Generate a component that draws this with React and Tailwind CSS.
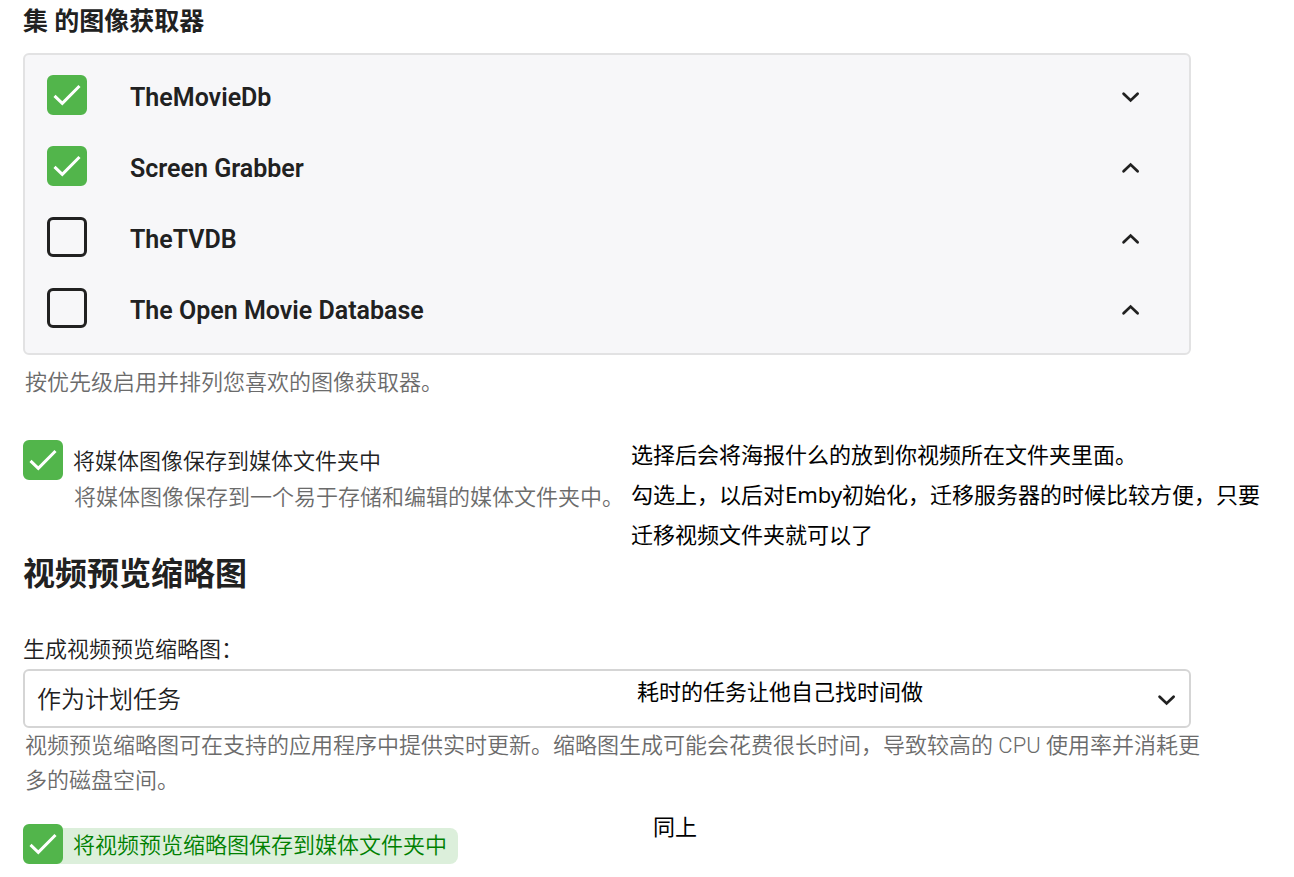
import { useState } from "react";

const FETCHERS = [
  { id: "tmdb", name: "TheMovieDb", enabled: true, direction: "down" },
  { id: "grabber", name: "Screen Grabber", enabled: true, direction: "up" },
  { id: "tvdb", name: "TheTVDB", enabled: false, direction: "up" },
  { id: "omdb", name: "The Open Movie Database", enabled: false, direction: "up" },
];

function Chevron({ direction }) {
  return (
    <svg viewBox="0 0 24 24" className="block size-6" fill="none" stroke="#212121" strokeWidth="2.8" strokeLinecap="round" strokeLinejoin="miter" aria-hidden="true">
      <path d={direction === "down" ? "M4.6 8.8 11.6 15.4l7-6.6" : "M4.6 15.2 11.6 8.6l7 6.6"} />
    </svg>
  );
}

function Checkbox({ id, defaultChecked }) {
  const [checked, setChecked] = useState(defaultChecked);
  return (
    <span className="z-10 grid size-10 shrink-0">
      <input
        id={id}
        type="checkbox"
        checked={checked}
        onChange={(e) => setChecked(e.target.checked)}
        className="col-start-1 row-start-1 size-10 appearance-none rounded-md border-3 border-[#212121] checked:border-[#52b54b] checked:bg-[#52b54b]"
      />
      {checked && (
        <svg viewBox="0 0 40 40" className="pointer-events-none col-start-1 row-start-1 size-10" fill="none" stroke="#fff" strokeWidth="3" aria-hidden="true">
          <path d="M7.5 20.8 15.3 28.3 32.5 11" />
        </svg>
      )}
    </span>
  );
}

export default function App() {
  return (
    <main className="bg-white pt-1 pb-3 pl-[23px] font-['Roboto','Noto_Sans_CJK_SC',sans-serif] text-[22px] leading-[35px] font-[350] text-[#212121]">
      <section className="mr-[103px]">
        <h3 className="text-[25px] leading-9 font-bold">集 的图像获取器</h3>
        <ul className="mt-[13px] rounded-md border-2 border-[#e2e2e3] bg-[#f7f7f9] pt-1 pr-[46px] pb-[10px] pl-[22px]">
          {FETCHERS.map((f) => (
            <li key={f.id} className="flex h-[71px] items-center">
              <Checkbox id={f.id} defaultChecked={f.enabled} />
              <label htmlFor={f.id} className="grow pt-[6px] pl-[43px] text-[25px] font-semibold">
                {f.name}
              </label>
              <button type="button" className="pt-1" aria-label={f.direction === "down" ? "下移" : "上移"}>
                <Chevron direction={f.direction} />
              </button>
            </li>
          ))}
        </ul>
        <p className="mt-[10px] pl-[2px] text-[#6b6b6b]">按优先级启用并排列您喜欢的图像获取器。</p>
      </section>

      <section className="mt-[34px] mr-[23px] grid grid-cols-[608px_1fr]">
        <div className="pt-[6px]">
          <div className="flex items-center">
            <Checkbox id="save-images" defaultChecked />
            <label htmlFor="save-images" className="pt-[2px] pl-[10px]">将媒体图像保存到媒体文件夹中</label>
          </div>
          <p className="pl-[51px] whitespace-nowrap text-[#6b6b6b]">将媒体图像保存到一个易于存储和编辑的媒体文件夹中。</p>
        </div>
        <p className="font-['Noto_Sans','Noto_Sans_CJK_SC',sans-serif] leading-10 font-normal text-black">
          选择后会将海报什么的放到你视频所在文件夹里面。
          <br />
          勾选上，以后对Emby初始化，迁移服务器的时候比较方便，只要迁移视频文件夹就可以了
        </p>
      </section>

      <section className="mt-1">
        <h2 className="text-[32px] leading-8 font-bold">视频预览缩略图</h2>
        <label htmlFor="preview" className="mt-[42px] block">生成视频预览缩略图：</label>
        <div className="relative mt-[2px] mr-[103px] flex items-center">
          <select id="preview" className="h-[59px] w-full appearance-none rounded-md border-2 border-[#d5d5d5] bg-white px-3 pt-[2px] text-2xl font-[350]">
            <option>作为计划任务</option>
          </select>
          <span className="pointer-events-none absolute right-3 pt-[2px]">
            <Chevron direction="down" />
          </span>
          <span className="pointer-events-none absolute top-[6px] left-[614px] font-normal text-black">耗时的任务让他自己找时间做</span>
        </div>
        <p className="mr-[80px] pl-[2px] text-[#6b6b6b]">
          视频预览缩略图可在支持的应用程序中提供实时更新。缩略图生成可能会花费很长时间，导致较高的 CPU 使用率并消耗更多的磁盘空间。
        </p>
      </section>

      <section className="mt-3 grid grid-cols-[630px_1fr]">
        <div className="flex items-end pt-[14px]">
          <Checkbox id="save-previews" defaultChecked />
          <label htmlFor="save-previews" className="-ml-2 rounded-r-lg bg-[#dcefdb] pr-[11px] pl-[18px] leading-9 text-[#008000]">
            将视频预览缩略图保存到媒体文件夹中
          </label>
        </div>
        <p className="font-normal text-black">同上</p>
      </section>
    </main>
  );
}
